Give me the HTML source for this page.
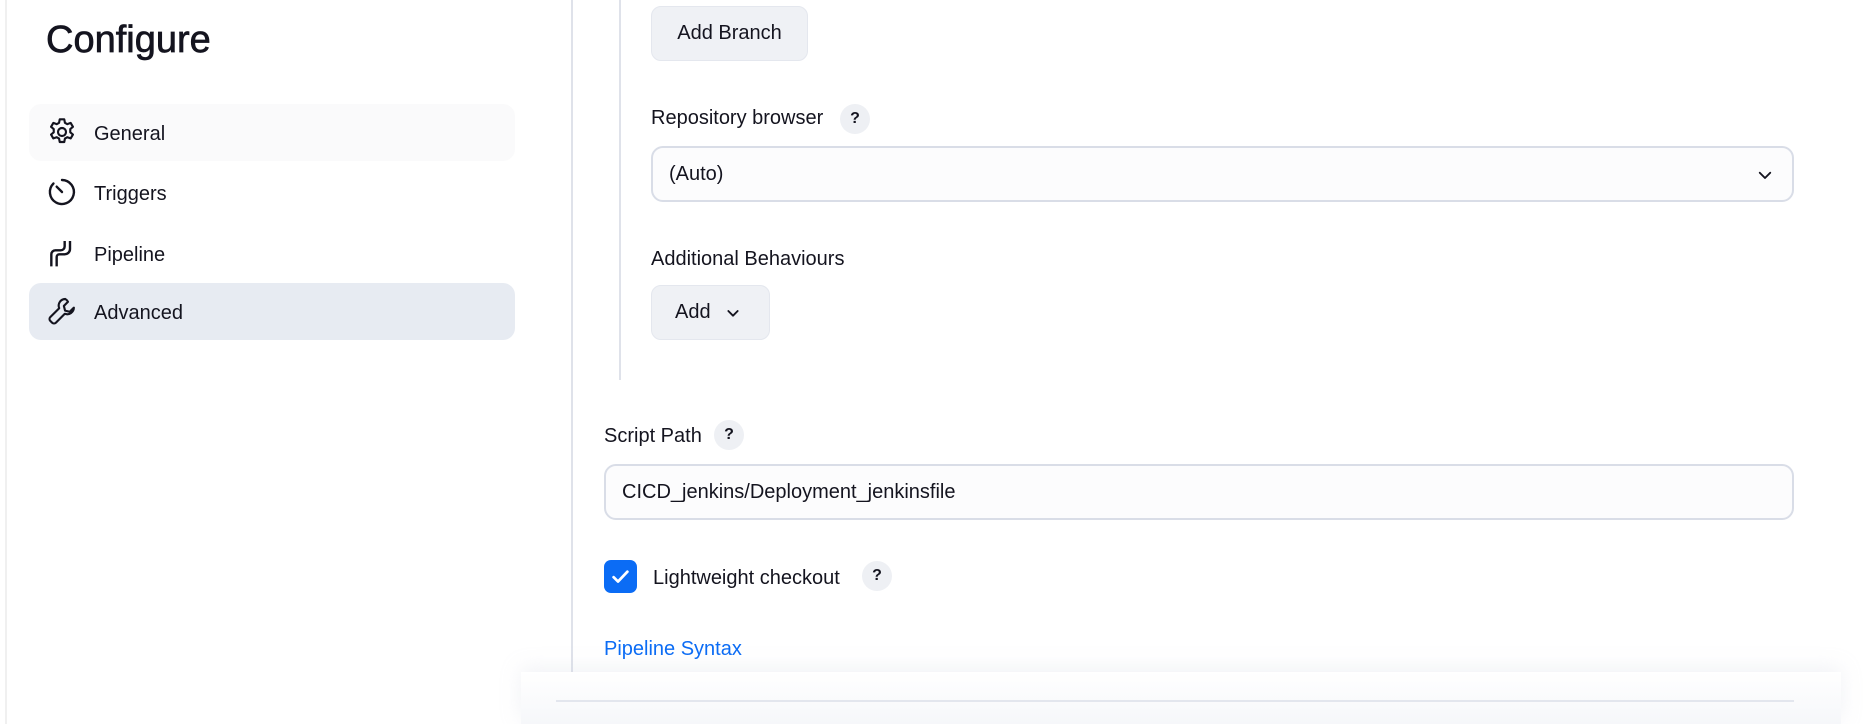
<!DOCTYPE html>
<html><head><meta charset="utf-8"><style>
*{box-sizing:border-box;margin:0;padding:0}
body{width:1870px;height:724px;overflow:hidden;background:#fff;font-family:"Liberation Sans",sans-serif;color:#14141f;position:relative}
.abs{position:absolute}
.lbl{font-size:20px;color:#14141f}
.q{position:absolute;width:30px;height:30px;border-radius:50%;background:#eef0f4;font-size:16px;font-weight:bold;text-align:center;line-height:30px}
.btn{position:absolute;background:#eff1f5;border:1px solid #e4e7ee;border-radius:10px;font-size:20px;display:flex;align-items:center;justify-content:center}
.field{position:absolute;background:#fcfcfd;border:2px solid #d9dde7;border-radius:12px;font-size:20px;display:flex;align-items:center;padding-left:16px}
.nav{position:absolute;left:29px;width:486px;height:57px;border-radius:12px;font-size:20px}
.nav svg{position:absolute;left:17px;top:12px}
.nav span{position:absolute;left:65px;top:19px}
</style></head><body>
<div class="abs" style="left:5px;top:0;width:2px;height:724px;background:#f0f0f0"></div>
<div class="abs" style="left:571px;top:0;width:2px;height:724px;background:#dfe2ea"></div>
<div class="abs" style="left:46px;top:19px;font-size:38px;-webkit-text-stroke:0.7px #14141f">Configure</div>

<div class="nav" style="top:104px;background:#fafafb">
<svg width="32" height="32" viewBox="0 0 24 24" fill="none" stroke="#14141f" stroke-width="1.6" stroke-linejoin="round"><path d="M10.3 2.5h3.4l.5 2.6 1.8 1 2.5-.9 1.7 2.9-2 1.7v2.4l2 1.7-1.7 2.9-2.5-.9-1.8 1-.5 2.6h-3.4l-.5-2.6-1.8-1-2.5.9-1.7-2.9 2-1.7v-2.4l-2-1.7 1.7-2.9 2.5.9 1.8-1z"/><circle cx="12" cy="12" r="3"/></svg>
<span>General</span></div>
<div class="nav" style="top:164px">
<svg width="32" height="32" viewBox="0 0 24 24" fill="none" stroke="#14141f" stroke-width="1.8" stroke-linecap="round"><path d="M12 3a9 9 0 1 1-6.4 2.6"/><path d="M8 8l4 4"/></svg>
<span>Triggers</span></div>
<div class="nav" style="top:225px">
<svg width="32" height="32" viewBox="0 0 24 24" fill="none" stroke="#14141f" stroke-width="1.8"><path d="M4 22v-9a3 3 0 0 1 3-3h4a3 3 0 0 0 3-3V3M8 22v-7a2 2 0 0 1 2-2h4a4 4 0 0 0 4-4V3"/></svg>
<span>Pipeline</span></div>
<div class="nav" style="top:283px;background:#e7ebf2">
<svg width="32" height="32" viewBox="0 0 24 24" fill="none" stroke="#14141f" stroke-width="1.6" stroke-linejoin="round"><path d="M14.5 3a5 5 0 0 0-4.6 6.9L3.2 16.6a2 2 0 0 0 0 2.8l1.4 1.4a2 2 0 0 0 2.8 0l6.7-6.7A5 5 0 0 0 20.9 9.5l-3.1 3.1-3.5-.9-.9-3.5 3.1-3.1A5 5 0 0 0 14.5 3z"/></svg>
<span>Advanced</span></div>

<div class="abs" style="left:619px;top:0;width:2px;height:380px;background:#dfe2ea"></div>
<div class="btn" style="left:651px;top:6px;width:157px;height:55px">Add Branch</div>
<div class="abs lbl" style="left:651px;top:107px">Repository browser</div>
<div class="q" style="left:840px;top:104px">?</div>
<div class="field" style="left:651px;top:146px;width:1143px;height:56px">(Auto)
<svg class="abs" style="right:18px;top:18px" width="18" height="18" viewBox="0 0 24 24" fill="none" stroke="#14141f" stroke-width="2.5" stroke-linecap="round" stroke-linejoin="round"><path d="M5 9l7 7 7-7"/></svg></div>
<div class="abs lbl" style="left:651px;top:248px">Additional Behaviours</div>
<div class="btn" style="left:651px;top:285px;width:119px;height:55px;justify-content:flex-start;padding-left:23px">Add
<svg style="margin-left:14px" width="16" height="16" viewBox="0 0 24 24" fill="none" stroke="#14141f" stroke-width="2.8" stroke-linecap="round" stroke-linejoin="round"><path d="M5 9l7 7 7-7"/></svg></div>

<div class="abs lbl" style="left:604px;top:425px">Script Path</div>
<div class="q" style="left:714px;top:420px">?</div>
<div class="field" style="left:604px;top:464px;width:1190px;height:56px">CICD_jenkins/Deployment_jenkinsfile</div>
<div class="abs" style="left:604px;top:560px;width:33px;height:33px;border-radius:7px;background:#0b6cf5">
<svg width="33" height="33" viewBox="0 0 24 24" fill="none" stroke="#fff" stroke-width="2" stroke-linecap="round" stroke-linejoin="round"><path d="M7 12.5l3.2 3.2L17 8.5"/></svg></div>
<div class="abs lbl" style="left:653px;top:567px">Lightweight checkout</div>
<div class="q" style="left:862px;top:561px">?</div>
<div class="abs" style="left:604px;top:638px;font-size:20px;color:#0b6cf5">Pipeline Syntax</div>

<div class="abs" style="left:521px;top:672px;width:1320px;height:52px;background:linear-gradient(#fff,#f6f7fa);box-shadow:0 -4px 20px rgba(200,205,220,.25)"></div>
<div class="abs" style="left:556px;top:700px;width:1238px;height:2px;background:#e3e6ee"></div>
</body></html>
